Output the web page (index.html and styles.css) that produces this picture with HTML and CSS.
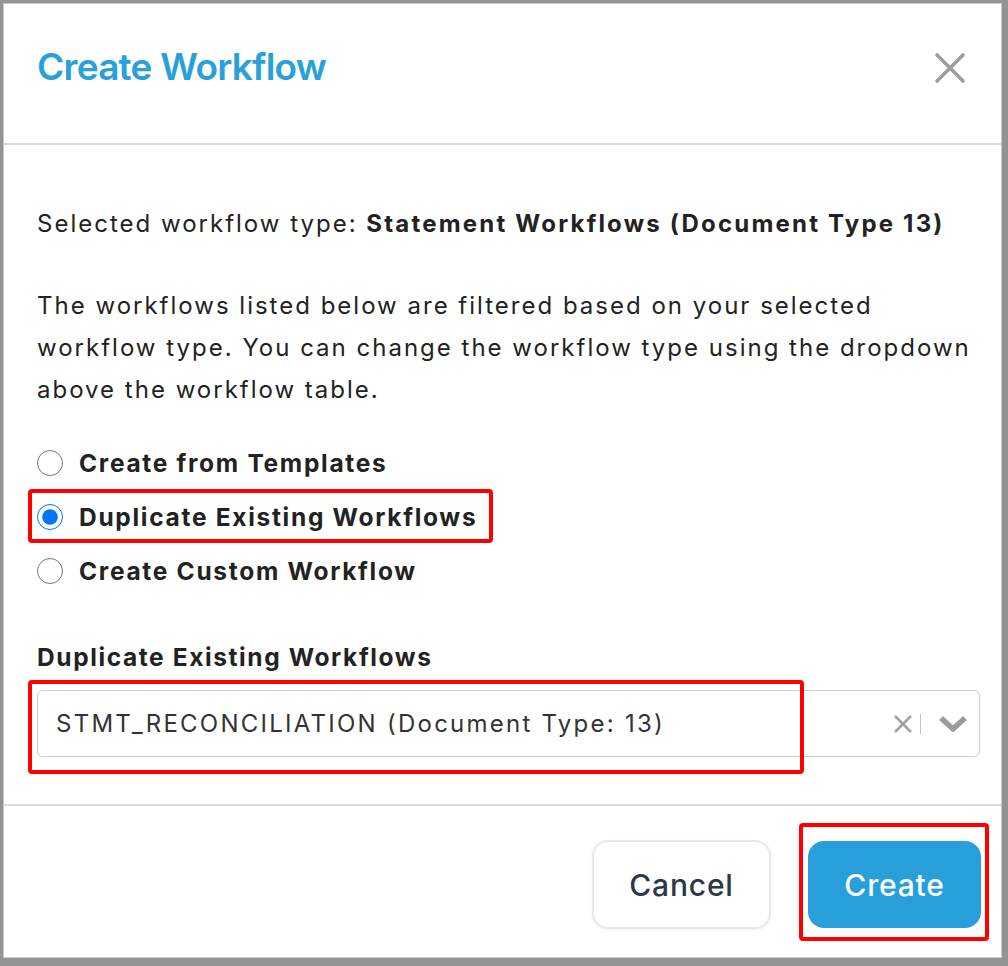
FILE: index.html
```html
<!DOCTYPE html>
<html lang="en">
<head>
  <meta charset="UTF-8">
  <meta name="viewport" content="width=device-width, initial-scale=1.0">
  <title>Create Workflow</title>
  <link rel="stylesheet" href="styles.css">
</head>
<body>
  <div class="modal">
    <header class="modal-header">
      <h1>Create Workflow</h1>
      <button class="close-btn" aria-label="Close">
        <svg width="34" height="34" viewBox="0 0 34 34"><path d="M4 4 L30 30 M30 4 L4 30" stroke="#9a9ea4" stroke-width="3.6" stroke-linecap="round"/></svg>
      </button>
    </header>

    <main class="modal-body">
      <p class="selected-type">Selected workflow type: <strong>Statement Workflows (Document Type 13)</strong></p>
      <p class="hint">The workflows listed below are filtered based on your selected workflow type. You can change the workflow type using the dropdown above the workflow table.</p>

      <div class="options">
        <label class="option"><input type="radio" name="mode"> Create from Templates</label>
        <label class="option"><input type="radio" name="mode" checked> Duplicate Existing Workflows</label>
        <label class="option"><input type="radio" name="mode"> Create Custom Workflow</label>
      </div>

      <div class="field-label">Duplicate Existing Workflows</div>
      <div class="select">
        <span class="select-value">STMT_RECONCILIATION (Document Type: 13)</span>
        <span class="select-clear">
          <svg width="22" height="22" viewBox="0 0 22 22"><path d="M3 3 L19 19 M19 3 L3 19" stroke="#a3a3a3" stroke-width="2.6"/></svg>
        </span>
        <span class="select-sep"></span>
        <span class="select-arrow">
          <svg width="30" height="20" viewBox="0 0 30 20"><path d="M3 4 L15 15 L27 4" fill="none" stroke="#9b9b9b" stroke-width="5.5" stroke-linejoin="round"/></svg>
        </span>
      </div>
    </main>

    <footer class="modal-footer">
      <button class="btn btn-cancel">Cancel</button>
      <button class="btn btn-create">Create</button>
    </footer>

    <!-- red callouts drawn on top -->
    <span class="callout callout-radio"></span>
    <span class="callout callout-select"></span>
    <span class="callout callout-create"></span>
  </div>
</body>
</html>
```

FILE: styles.css
```css
* {
  box-sizing: border-box;
}
body {
  margin: 0;
  background: #939393;
  font-family: Inter, 'Noto Sans', sans-serif;
  color: #222;
  height: 966px;
  overflow: hidden;
}
.modal {
  position: relative;
  margin: 3px 0 0 3px;
  width: 999px;
  height: 955px;
  background: #fff;
  border: 1px solid #c9c9c9;
  display: flex;
  flex-direction: column;
}
.modal-header {
  height: 141px;
  padding: 0 34px 0 33px;
  display: flex;
  align-items: center;
  justify-content: space-between;
  border-bottom: 2px solid #d8dbe0;
}
.modal-header h1 {
  margin: 0 0 15px;
  font-size: 37px;
  font-weight: 600;
  color: #28a0da;
  letter-spacing: -0.75px;
}
.close-btn {
  border: 0;
  background: none;
  padding: 0;
  margin-bottom: 12px;
  display: flex;
}
.modal-body {
  padding: 58px 21px 0 33px;
  height: 661px;
  border-bottom: 2px solid #d8dbe0;
  font-size: 24px;
  line-height: 42px;
  letter-spacing: 2px;
}
.modal-body p {
  margin: 0;
}
.selected-type strong {
  font-weight: 700;
  letter-spacing: 2.2px;
}
.hint {
  margin-top: 40px !important;
}
.options {
  margin-top: 25px;
}
.option {
  display: flex;
  align-items: center;
  height: 54px;
  font-weight: 700;
  font-size: 24.5px;
  letter-spacing: 1.7px;
}
.option input {
  width: 26px;
  height: 26px;
  margin: 0 16px 0 0;
}
.field-label {
  margin-top: 38px;
  font-weight: 700;
  font-size: 24.5px;
  letter-spacing: 1.6px;
}
.select {
  margin-top: 12px;
  height: 67px;
  border: 1.5px solid #cccccc;
  border-radius: 6px;
  display: flex;
  align-items: center;
  padding: 0 0 0 18px;
  color: #333;
  letter-spacing: 2.25px;
}
.select-value {
  flex: 1;
}
.select-clear {
  display: flex;
  margin-right: 6px;
}
.select-sep {
  width: 1px;
  height: 20px;
  background: #c4c4c4;
  margin-right: 17px;
}
.select-arrow {
  display: flex;
  margin-right: 11px;
}
.modal-footer {
  flex: 1;
  display: flex;
  justify-content: flex-end;
  align-items: flex-start;
  gap: 37px;
  padding: 34px 20px 0;
}
.btn {
  font-family: Inter, 'Noto Sans', sans-serif;
  font-size: 30px;
  font-weight: 500;
  letter-spacing: 0.8px;
  border-radius: 16px;
  cursor: pointer;
}
.btn-cancel {
  width: 179px;
  height: 89px;
  background: #fff;
  color: #2d3748;
  border: 2px solid #e6e8eb;
  box-shadow: 0 1px 3px rgba(0, 0, 0, 0.06);
}
.btn-create {
  width: 173px;
  height: 87px;
  margin-top: 1px;
  background: #289fda;
  color: #fff;
  border: 0;
}
.callout {
  position: absolute;
  border: 4px solid #ff0000;
  border-radius: 4px;
  pointer-events: none;
}
.callout-radio {
  left: 24px;
  top: 485px;
  width: 465px;
  height: 54px;
}
.callout-select {
  left: 24px;
  top: 676px;
  width: 776px;
  height: 94px;
}
.callout-create {
  left: 795px;
  top: 819px;
  width: 190px;
  height: 118px;
}
```
